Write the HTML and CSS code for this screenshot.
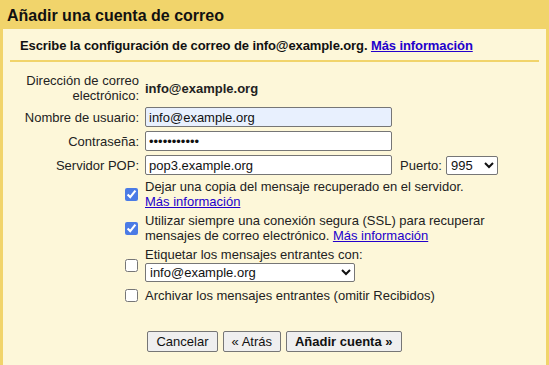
FILE: index.html
```html
<!DOCTYPE html>
<html lang="es">
<head>
    <meta charset="UTF-8">
    <title>Añadir una cuenta de correo</title>
    <link rel="stylesheet" href="styles.css">
</head>
<body>
    <h1 class="dialog-title">Añadir una cuenta de correo</h1>

    <div class="panel">
        <p class="intro">
            Escribe la configuración de correo de info@example.org.
            <a href="#">Más información</a>
        </p>

        <form class="account-form">
            <!-- Address -->
            <div class="label">Dirección de correo<br>electrónico:</div>
            <div class="value">info@example.org</div>

            <label class="label" for="username">Nombre de usuario:</label>
            <div><input type="text" id="username" class="text-input autofill" value="info@example.org"></div>

            <label class="label" for="password">Contraseña:</label>
            <div><input type="password" id="password" class="text-input" value="secretpass1"></div>

            <label class="label" for="pop-server">Servidor POP:</label>
            <div class="server-row">
                <input type="text" id="pop-server" class="text-input" value="pop3.example.org">
                <label for="port">Puerto:</label>
                <select id="port" class="port-select">
                    <option>995</option>
                    <option>110</option>
                </select>
            </div>

            <!-- Options -->
            <div class="check-cell"><input type="checkbox" id="leave-copy" checked></div>
            <label class="option" for="leave-copy">Dejar una copia del mensaje recuperado en el servidor.<br><a href="#">Más información</a></label>

            <div class="check-cell"><input type="checkbox" id="use-ssl" checked></div>
            <label class="option" for="use-ssl">Utilizar siempre una conexión segura (SSL) para recuperar<br>mensajes de correo electrónico. <a href="#">Más información</a></label>

            <div class="check-cell"><input type="checkbox" id="add-label"></div>
            <div class="option">
                <label for="add-label">Etiquetar los mensajes entrantes con:</label>
                <select class="label-select">
                    <option>info@example.org</option>
                </select>
            </div>

            <div class="check-cell"><input type="checkbox" id="archive"></div>
            <label class="option" for="archive">Archivar los mensajes entrantes (omitir Recibidos)</label>
        </form>

        <div class="actions">
            <button type="button">Cancelar</button>
            <button type="button">« Atrás</button>
            <button type="submit" class="primary">Añadir cuenta »</button>
        </div>
    </div>
</body>
</html>
```

FILE: styles.css
```css
html, body {
    height: 100%;
}

body {
    margin: 0;
    background: #f1d46b;
    font-family: 'Liberation Sans', Arial, sans-serif;
    font-size: 13px;
    color: #222;
    display: flex;
    flex-direction: column;
}

a {
    color: #2200cc;
}

.dialog-title {
    margin: 0;
    padding: 6px 7px 4px;
    font-size: 16px;
    line-height: 19px;
    color: #111;
}

.panel {
    flex: 1;
    margin: 0 3px;
    background: #fdf7d9;
}

.intro {
    margin: 0 7px;
    padding: 9px 10px 7px;
    border-bottom: 2px solid #f1d46b;
    line-height: 15px;
    font-weight: bold;
    letter-spacing: -0.1px;
    color: #111;
}

.account-form {
    display: grid;
    grid-template-columns: 136px 1fr;
    column-gap: 6px;
    row-gap: 4px;
    padding-top: 11px;
}

.label {
    text-align: right;
    align-self: center;
}

.value {
    font-weight: bold;
    align-self: center;
}

.text-input {
    box-sizing: border-box;
    width: 247px;
    height: 20px;
    padding: 1px 3px;
    border: 1px solid #767676;
    border-radius: 2px;
    background: #fff;
    font-family: inherit;
    font-size: 13px;
    color: #111;
}

.text-input.autofill {
    background: #e8f0fe;
}

.server-row {
    display: flex;
    align-items: center;
}

.server-row label {
    margin-left: 8px;
    margin-right: 4px;
}

select {
    box-sizing: border-box;
    height: 19px;
    border: 1px solid #767676;
    border-radius: 2px;
    background: #fff;
    font-family: inherit;
    font-size: 13px;
    color: #111;
}

.port-select {
    width: 52px;
}

.check-cell {
    justify-self: end;
    align-self: center;
    display: flex;
}

.check-cell input {
    width: 13px;
    height: 13px;
    margin: 0 1px 0 0;
    accent-color: #4b7be5;
}

.option {
    white-space: nowrap;
    line-height: 15px;
}

.label-select {
    display: block;
    width: 210px;
    margin: 1px 0 2px;
}

.actions {
    display: flex;
    justify-content: center;
    gap: 5px;
    margin-top: 28px;
}

.actions button {
    height: 21px;
    padding: 0 8px;
    border: 1px solid #767676;
    border-radius: 2px;
    background: #efefef;
    font-family: inherit;
    font-size: 13px;
    color: #111;
}

.actions .primary {
    font-weight: bold;
}
```
